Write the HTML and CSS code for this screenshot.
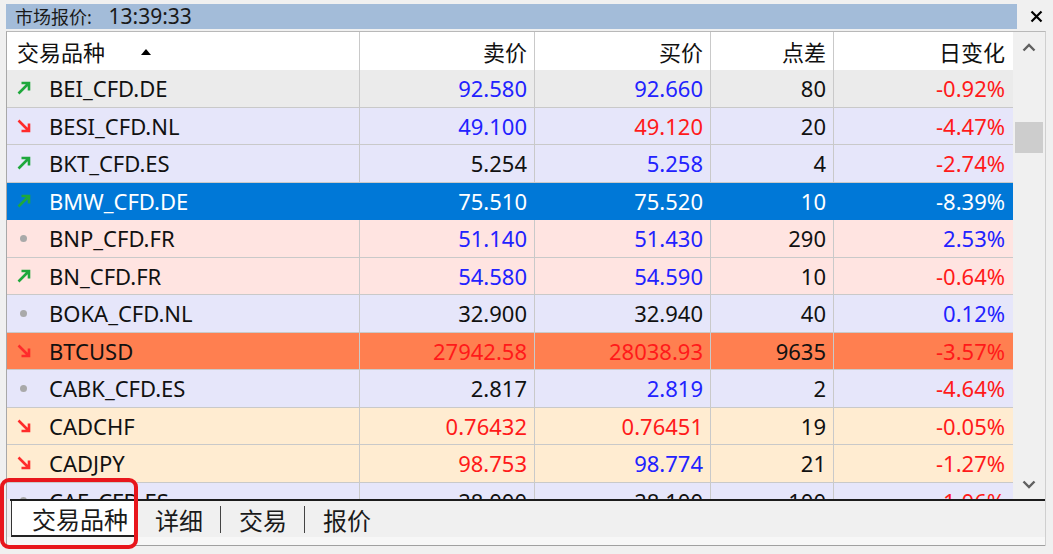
FILE: index.html
```html
<!DOCTYPE html>
<html lang="zh">
<head>
<meta charset="utf-8">
<title>市场报价</title>
<link rel="stylesheet" href="styles.css">
</head>
<body>
<div class="app">
  <div class="titlebar-row">
    <div class="titlebar">市场报价: <span class="time">13:39:33</span></div>
    <div class="close">
      <svg width="13" height="13" viewBox="0 0 13 13"><path d="M1.5 1.5 L11.5 11.5 M11.5 1.5 L1.5 11.5" stroke="#000" stroke-width="2.2" fill="none"/></svg>
    </div>
  </div>

  <div class="panel">
    <div class="grid-area">
      <div class="table">
        <div class="row head">
          <div class="cell sym">交易品种<svg class="sort" width="10" height="7" viewBox="0 0 10 7"><path d="M0 7 L5 1 L10 7 Z" fill="#000"/></svg></div>
          <div class="cell num">卖价</div>
          <div class="cell num">买价</div>
          <div class="cell num">点差</div>
          <div class="cell num last">日变化</div>
        </div>

        <div class="row bg-gray">
          <div class="cell sym"><svg class="ic" viewBox="0 0 14 14"><path d="M1.5 12.5 L12 2 M4.5 2 H12 V9.5" class="up"/></svg>BEI_CFD.DE</div>
          <div class="cell num blue">92.580</div>
          <div class="cell num blue">92.660</div>
          <div class="cell num">80</div>
          <div class="cell num last red">-0.92%</div>
        </div>

        <div class="row bg-lav">
          <div class="cell sym"><svg class="ic" viewBox="0 0 14 14"><path d="M1.5 1.5 L12 12 M12 4.5 V12 H4.5" class="down"/></svg>BESI_CFD.NL</div>
          <div class="cell num blue">49.100</div>
          <div class="cell num red">49.120</div>
          <div class="cell num">20</div>
          <div class="cell num last red">-4.47%</div>
        </div>

        <div class="row bg-lav">
          <div class="cell sym"><svg class="ic" viewBox="0 0 14 14"><path d="M1.5 12.5 L12 2 M4.5 2 H12 V9.5" class="up"/></svg>BKT_CFD.ES</div>
          <div class="cell num">5.254</div>
          <div class="cell num blue">5.258</div>
          <div class="cell num">4</div>
          <div class="cell num last red">-2.74%</div>
        </div>

        <div class="row bg-sel">
          <div class="cell sym"><svg class="ic" viewBox="0 0 14 14"><path d="M1.5 12.5 L12 2 M4.5 2 H12 V9.5" class="up"/></svg>BMW_CFD.DE</div>
          <div class="cell num">75.510</div>
          <div class="cell num">75.520</div>
          <div class="cell num">10</div>
          <div class="cell num last">-8.39%</div>
        </div>

        <div class="row bg-pink">
          <div class="cell sym"><span class="dot"></span>BNP_CFD.FR</div>
          <div class="cell num blue">51.140</div>
          <div class="cell num blue">51.430</div>
          <div class="cell num">290</div>
          <div class="cell num last blue">2.53%</div>
        </div>

        <div class="row bg-pink">
          <div class="cell sym"><svg class="ic" viewBox="0 0 14 14"><path d="M1.5 12.5 L12 2 M4.5 2 H12 V9.5" class="up"/></svg>BN_CFD.FR</div>
          <div class="cell num blue">54.580</div>
          <div class="cell num blue">54.590</div>
          <div class="cell num">10</div>
          <div class="cell num last red">-0.64%</div>
        </div>

        <div class="row bg-lav">
          <div class="cell sym"><span class="dot"></span>BOKA_CFD.NL</div>
          <div class="cell num">32.900</div>
          <div class="cell num">32.940</div>
          <div class="cell num">40</div>
          <div class="cell num last blue">0.12%</div>
        </div>

        <div class="row bg-coral">
          <div class="cell sym"><svg class="ic" viewBox="0 0 14 14"><path d="M1.5 1.5 L12 12 M12 4.5 V12 H4.5" class="down"/></svg>BTCUSD</div>
          <div class="cell num red">27942.58</div>
          <div class="cell num red">28038.93</div>
          <div class="cell num">9635</div>
          <div class="cell num last red">-3.57%</div>
        </div>

        <div class="row bg-lav">
          <div class="cell sym"><span class="dot"></span>CABK_CFD.ES</div>
          <div class="cell num">2.817</div>
          <div class="cell num blue">2.819</div>
          <div class="cell num">2</div>
          <div class="cell num last red">-4.64%</div>
        </div>

        <div class="row bg-cream">
          <div class="cell sym"><svg class="ic" viewBox="0 0 14 14"><path d="M1.5 1.5 L12 12 M12 4.5 V12 H4.5" class="down"/></svg>CADCHF</div>
          <div class="cell num red">0.76432</div>
          <div class="cell num red">0.76451</div>
          <div class="cell num">19</div>
          <div class="cell num last red">-0.05%</div>
        </div>

        <div class="row bg-cream">
          <div class="cell sym"><svg class="ic" viewBox="0 0 14 14"><path d="M1.5 1.5 L12 12 M12 4.5 V12 H4.5" class="down"/></svg>CADJPY</div>
          <div class="cell num red">98.753</div>
          <div class="cell num blue">98.774</div>
          <div class="cell num">21</div>
          <div class="cell num last red">-1.27%</div>
        </div>

        <div class="row bg-lav">
          <div class="cell sym"><span class="dot"></span>CAF_CFD.ES</div>
          <div class="cell num">28.000</div>
          <div class="cell num">28.100</div>
          <div class="cell num">100</div>
          <div class="cell num last red">-1.06%</div>
        </div>
      </div>

      <div class="scrollbar">
        <div class="sb-btn">
          <svg width="14" height="9" viewBox="0 0 14 9"><path d="M1.5 7.5 L7 2 L12.5 7.5" stroke="#606060" stroke-width="2.4" fill="none"/></svg>
        </div>
        <div class="sb-track"><div class="sb-thumb"></div></div>
        <div class="sb-btn">
          <svg width="14" height="9" viewBox="0 0 14 9"><path d="M1.5 1.5 L7 7 L12.5 1.5" stroke="#606060" stroke-width="2.4" fill="none"/></svg>
        </div>
      </div>
    </div>

    <div class="tabs">
      <div class="tab active">交易品种</div>
      <div class="tab first">详细</div>
      <span class="sep"></span>
      <div class="tab">交易</div>
      <span class="sep"></span>
      <div class="tab">报价</div>
    </div>
    <div class="tabs-foot"></div>
  </div>

  <div class="annot"></div>
</div>
</body>
</html>
```

FILE: styles.css
```css
* { box-sizing: border-box; }

html, body {
  margin: 0;
  padding: 0;
  background: #f0f0f0;
}

body {
  font-family: "Noto Sans", "Noto Sans CJK SC", sans-serif;
  color: #111;
}

.app {
  position: relative;
  width: 1053px;
  height: 554px;
  overflow: hidden;
  padding-top: 4px;
}

.titlebar-row {
  display: flex;
  height: 25px;
  margin-left: 6px;
}

.titlebar {
  width: 1011px;
  background: #a3bcd9;
  font-size: 18px;
  line-height: 25px;
  padding-left: 9px;
  color: #1a1a1a;
  white-space: nowrap;
}

.titlebar .time {
  font-size: 21px;
  margin-left: 12px;
}

.close {
  flex: 1;
  display: flex;
  align-items: center;
  justify-content: center;
  padding-left: 2px;
}

.panel {
  margin: 2px 0 0 6px;
  width: 1040px;
  border-left: 1px solid #a8a8a8;
  border-top: 1px solid #b8b8b8;
  border-right: 1px solid #cfcfcf;
}

.grid-area {
  display: flex;
  height: 467px;
}

.table {
  width: 1006px;
  overflow: hidden;
}

.row {
  display: grid;
  grid-template-columns: 353px 175px 176px 123px 179px;
  height: 37.5px;
  font-size: 22px;
}

.row.head {
  height: 38px;
  background: #fff;
}

.cell {
  display: flex;
  align-items: center;
  border-right: 1px solid #c9c9c9;
  border-bottom: 1px solid #c9c9c9;
  white-space: nowrap;
  overflow: hidden;
}

.head .cell { border-bottom: none; }

.cell.sym { padding-left: 10px; }
.cell.num { justify-content: flex-end; padding-right: 7px; }
.cell.last { border-right: none; padding-right: 8px; }

.sort { margin-left: 36px; }

.ic {
  width: 14px;
  height: 14px;
  margin-right: 18px;
  flex: none;
}
.ic path { fill: none; stroke-width: 2.6; stroke-linecap: butt; }
.ic .up { stroke: #1ea83c; }
.ic .down { stroke: #ff2b2b; }

.dot {
  width: 7px;
  height: 7px;
  border-radius: 50%;
  background: #a9a9a9;
  margin: 0 22px 0 3px;
  flex: none;
}

.bg-gray { background: #ebebeb; }
.bg-lav { background: #e6e6fa; }
.bg-pink { background: #ffe4e1; }
.bg-cream { background: #ffecd1; }
.bg-coral { background: #ff7f50; }
.bg-sel { background: #0078d7; color: #fff; }
.bg-sel .cell { border-color: #0078d7; }

.blue { color: #2222ff; }
.red { color: #ff1a1a; }

.scrollbar {
  width: 32px;
  background: #f0f0f0;
  display: flex;
  flex-direction: column;
}

.sb-btn {
  height: 30px;
  display: flex;
  align-items: center;
  justify-content: center;
}

.sb-track {
  flex: 1;
  padding: 60px 2px 0 2px;
}

.sb-thumb {
  height: 31px;
  background: #cdcdcd;
}

.tabs {
  display: flex;
  align-items: center;
  height: 38px;
  margin-left: 3px;
  border-top: 2px solid #1c1c1c;
  font-size: 24px;
}

.tab {
  height: 100%;
  display: flex;
  align-items: center;
  padding: 0 17px 0 18px;
  color: #1a1a1a;
}

.tab.first { padding-left: 20px; }

.tab.active {
  background: #fff;
  border-left: 1px solid #333;
  border-bottom: 2px solid #222;
  padding: 0 7px 0 20px;
  margin-left: 1px;
}

.sep {
  width: 1px;
  height: 27px;
  background: #444;
}

.tabs-foot {
  height: 9px;
  border-bottom: 1px solid #a0a0a0;
  background: #f7f7f7;
}

.annot {
  position: absolute;
  left: 0;
  top: 478px;
  width: 138px;
  height: 71px;
  border: 4px solid #e8161c;
  border-radius: 9px;
}
```
